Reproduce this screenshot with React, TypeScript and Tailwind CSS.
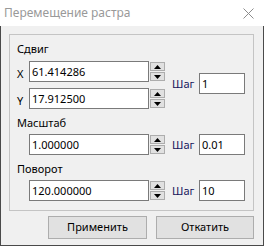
import React from 'react';

const font = { fontFamily: '"Noto Sans", "Open Sans", Arial, sans-serif' };

function Spinner() {
  return (
    <div className="ml-[1px] flex h-[21px] w-[15px] flex-col justify-center gap-[1px]">
      <div className="flex h-[9px] w-[15px] items-center justify-center border border-[#adadad] bg-[#e1e1e1]">
        <svg width="7" height="4" viewBox="0 0 7 4">
          <polygon points="0,4 7,4 3.5,0" fill="#000" />
        </svg>
      </div>
      <div className="flex h-[9px] w-[15px] items-center justify-center border border-[#adadad] bg-[#e1e1e1]">
        <svg width="7" height="4" viewBox="0 0 7 4">
          <polygon points="0,0 7,0 3.5,4" fill="#000" />
        </svg>
      </div>
    </div>
  );
}

function Field({ value, width = 'w-[120px]' }: { value: string; width?: string }) {
  return (
    <div
      className={`${width} flex h-[21px] items-center border border-[#7a7a7a] bg-white pl-[2px] text-[11px] leading-none text-black`}
    >
      {value}
    </div>
  );
}

function Step({ value }: { value: string }) {
  return (
    <div className="ml-[7px] flex items-center">
      <span className="w-[27px] text-[11px] leading-[15px] text-[#16165c]">Шаг</span>
      <Field value={value} width="w-[46px]" />
    </div>
  );
}

function Label({ children }: { children: React.ReactNode }) {
  return <div className="ml-[7px] text-[11px] leading-[15px] text-black">{children}</div>;
}

export default function App() {
  return (
    <div className="flex h-[246px] w-[264px] flex-col" style={font}>
      {/* Title bar */}
      <div className="flex h-[26px] items-center justify-between bg-white pl-[4px] pr-[10px]">
        <span className="text-[12px] text-[#999999]">Перемещение растра</span>
        <svg width="11" height="11" viewBox="0 0 11 11">
          <path d="M0.5 0.5 L10.5 10.5 M10.5 0.5 L0.5 10.5" stroke="#8c8c8c" strokeWidth="1" />
        </svg>
      </div>

      {/* Body */}
      <div className="flex h-[220px] flex-col border-x border-b border-[#4a4a4a] bg-[#f0f0f0] pl-[8px] pr-[9px] pt-[8px]">
        <div className="flex flex-col border border-[#c4c4c4] pb-[9px]">
          <div className="mt-[6px]">
            <Label>Сдвиг</Label>
          </div>
          <div className="mt-[5px] flex items-start">
            <div className="flex flex-col gap-[6px]">
              <div className="flex items-center">
                <span className="w-[19px] pl-[7px] pt-[3px] text-[11px] leading-[15px]">X</span>
                <Field value="61.414286" />
                <Spinner />
              </div>
              <div className="flex items-center">
                <span className="w-[19px] pl-[7px] pt-[3px] text-[11px] leading-[15px]">Y</span>
                <Field value="17.912500" />
                <Spinner />
              </div>
            </div>
            <div className="mt-[12px]">
              <Step value="1" />
            </div>
          </div>

          <div className="mt-[6px]">
            <Label>Масштаб</Label>
          </div>
          <div className="mt-[4px] flex items-center pl-[19px]">
            <Field value="1.000000" />
            <Spinner />
            <Step value="0.01" />
          </div>

          <div className="mt-[6px]">
            <Label>Поворот</Label>
          </div>
          <div className="mt-[4px] flex items-center pl-[19px]">
            <Field value="120.000000" />
            <Spinner />
            <Step value="10" />
          </div>
        </div>

        <div className="mt-[5px] flex justify-end gap-[9px]">
          <button className="flex h-[23px] w-[99px] items-center justify-center border border-[#adadad] bg-[#e1e1e1] text-[11px] text-black">
            Применить
          </button>
          <button className="flex h-[23px] w-[98px] items-center justify-center border border-[#adadad] bg-[#e1e1e1] text-[11px] text-black">
            Откатить
          </button>
        </div>
      </div>
    </div>
  );
}
